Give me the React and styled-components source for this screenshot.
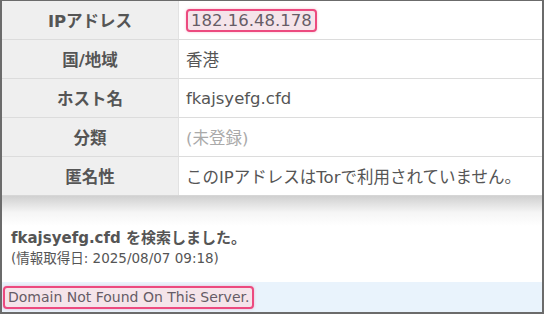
import React from "react";
import styled, { createGlobalStyle } from "styled-components";

const GlobalStyle = createGlobalStyle`
  html, body {
    margin: 0;
    padding: 0;
    background: #fff;
  }
  body {
    font-family: "DejaVu Sans", "Noto Sans CJK JP", sans-serif;
  }
`;

const Frame = styled.div`
  width: 544px;
  height: 314px;
  box-sizing: border-box;
  border: 2px solid #6b6b6b;
  border-top-width: 1px;
  display: flex;
  flex-direction: column;
  overflow: hidden;
  background: #fff;
`;

const Table = styled.div`
  display: grid;
  grid-template-columns: 177px 1fr;
  border-bottom: 1px solid #d6d6d6;
`;

const Label = styled.div`
  height: 38px;
  display: flex;
  align-items: center;
  justify-content: center;
  background: #efefef;
  border-right: 1px solid #e2e2e2;
  border-top: ${(p) => (p.first ? "none" : "1px solid #dcdcdc")};
  font-size: 16.5px;
  font-weight: bold;
  color: #555;
`;

const Value = styled.div`
  height: 38px;
  display: flex;
  align-items: center;
  padding-left: 7px;
  border-top: ${(p) => (p.first ? "none" : "1px solid #dcdcdc")};
  font-size: 16.5px;
  color: ${(p) => (p.muted ? "#aaa" : "#555")};
`;

const Mark = styled.span`
  display: inline-block;
  padding: 0 3px 0 3px;
  border: 2px solid #ec4a7f;
  border-radius: 4px;
  background: #f5e4ea;
  box-shadow: 0 0 3px rgba(236, 74, 127, 0.35);
  color: #665c66;
  font-size: ${(p) => p.size || "inherit"};
  line-height: 19px;
`;

const Fade = styled.div`
  height: 30px;
  background: linear-gradient(#d0d0d0, #f5f5f5 55%, #fff);
`;

const Result = styled.div`
  padding: 2px 9px 0;
  height: 56px;
  box-sizing: border-box;
  color: #555;
`;

const Title = styled.div`
  font-size: 15px;
  font-weight: bold;
  line-height: 20px;
`;

const Fetched = styled.div`
  font-size: 13.5px;
  line-height: 20px;
`;

const Notice = styled.div`
  flex: 1;
  background: #e9f3fc;
  display: flex;
  align-items: center;
  padding-left: 1px;
  font-size: 14px;
`;

const rows = [
  { label: "IPアドレス", value: <Mark>182.16.48.178</Mark> },
  { label: "国/地域", value: "香港" },
  { label: "ホスト名", value: "fkajsyefg.cfd" },
  { label: "分類", value: "(未登録)", muted: true },
  { label: "匿名性", value: "このIPアドレスはTorで利用されていません。" },
];

export default function App() {
  return (
    <>
      <GlobalStyle />
      <Frame>
        <Table>
          {rows.map((r, i) => (
            <React.Fragment key={r.label}>
              <Label first={i === 0}>{r.label}</Label>
              <Value first={i === 0} muted={r.muted}>
                {r.value}
              </Value>
            </React.Fragment>
          ))}
        </Table>
        <Fade />
        <Result>
          <Title>fkajsyefg.cfd を検索しました。</Title>
          <Fetched>(情報取得日: 2025/08/07 09:18)</Fetched>
        </Result>
        <Notice>
          <Mark>Domain Not Found On This Server.</Mark>
        </Notice>
      </Frame>
    </>
  );
}
